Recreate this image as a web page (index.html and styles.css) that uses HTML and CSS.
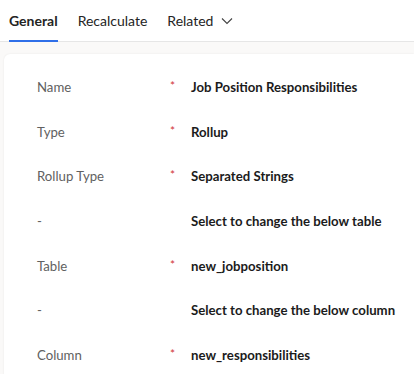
FILE: index.html
```html
<!doctype html>
<html lang="en">
  <head>
    <meta charset="UTF-8" />
    <meta name="viewport" content="width=device-width, initial-scale=1.0" />
    <title>Column properties</title>
    <link rel="stylesheet" href="styles.css">
  </head>
  <body>
    <div class="tabs">
      <div class="tab active">General</div>
      <div class="tab">Recalculate</div>
      <div class="tab">Related
        <svg class="chevron" width="12" height="8" viewBox="0 0 12 8">
          <path d="M1 1.5 L6 6.5 L11 1.5" fill="none" stroke="#424242" stroke-width="1.1" />
        </svg>
      </div>
    </div>

    <div class="content">
      <div class="card">
        <div class="row">
          <div class="label">Name</div>
          <div class="req">*</div>
          <div class="value">Job Position Responsibilities</div>
        </div>
        <div class="row">
          <div class="label">Type</div>
          <div class="req">*</div>
          <div class="value">Rollup</div>
        </div>
        <div class="row">
          <div class="label">Rollup Type</div>
          <div class="req">*</div>
          <div class="value">Separated Strings</div>
        </div>
        <div class="row">
          <div class="label">-</div>
          <div class="req"></div>
          <div class="value">Select to change the below table</div>
        </div>
        <div class="row">
          <div class="label">Table</div>
          <div class="req">*</div>
          <div class="value">new_jobposition</div>
        </div>
        <div class="row">
          <div class="label">-</div>
          <div class="req"></div>
          <div class="value">Select to change the below column</div>
        </div>
        <div class="row">
          <div class="label">Column</div>
          <div class="req">*</div>
          <div class="value">new_responsibilities</div>
        </div>
      </div>
    </div>
  </body>
</html>
```

FILE: styles.css
```css
body {
  margin: 0;
  font-family: Lato, "Noto Sans", sans-serif;
  background: #faf9f8;
  color: #242424;
  overflow: hidden;
}
.tabs {
  display: flex;
  gap: 20px;
  height: 41px;
  padding-left: 9px;
  background: white;
  border-bottom: 1px solid #e6e6e6;
}
.tab {
  display: flex;
  align-items: center;
  font-size: 14px;
  color: #242424;
  position: relative;
}
.tab.active {
  font-weight: bold;
}
.tab.active::after {
  content: '';
  position: absolute;
  left: 0;
  right: 0;
  bottom: -1px;
  height: 2px;
  background: #2f6fe8;
}
.chevron {
  margin-left: 8px;
}
.content {
  padding: 12px 0 0 4px;
}
.card {
  background: white;
  border-radius: 6px 0 0 0;
  box-shadow: 0 0 2px rgba(0, 0, 0, 0.08);
  padding: 25px 0 20px 33px;
}
.row {
  display: flex;
  height: 44.7px;
  align-items: flex-start;
  font-size: 13.2px;
  white-space: nowrap;
}
.label {
  width: 133px;
  color: #616161;
}
.req {
  width: 21px;
  color: #d13438;
  font-size: 12px;
  line-height: 14px;
}
.value {
  font-weight: bold;
  color: #1b1b1b;
}
```
